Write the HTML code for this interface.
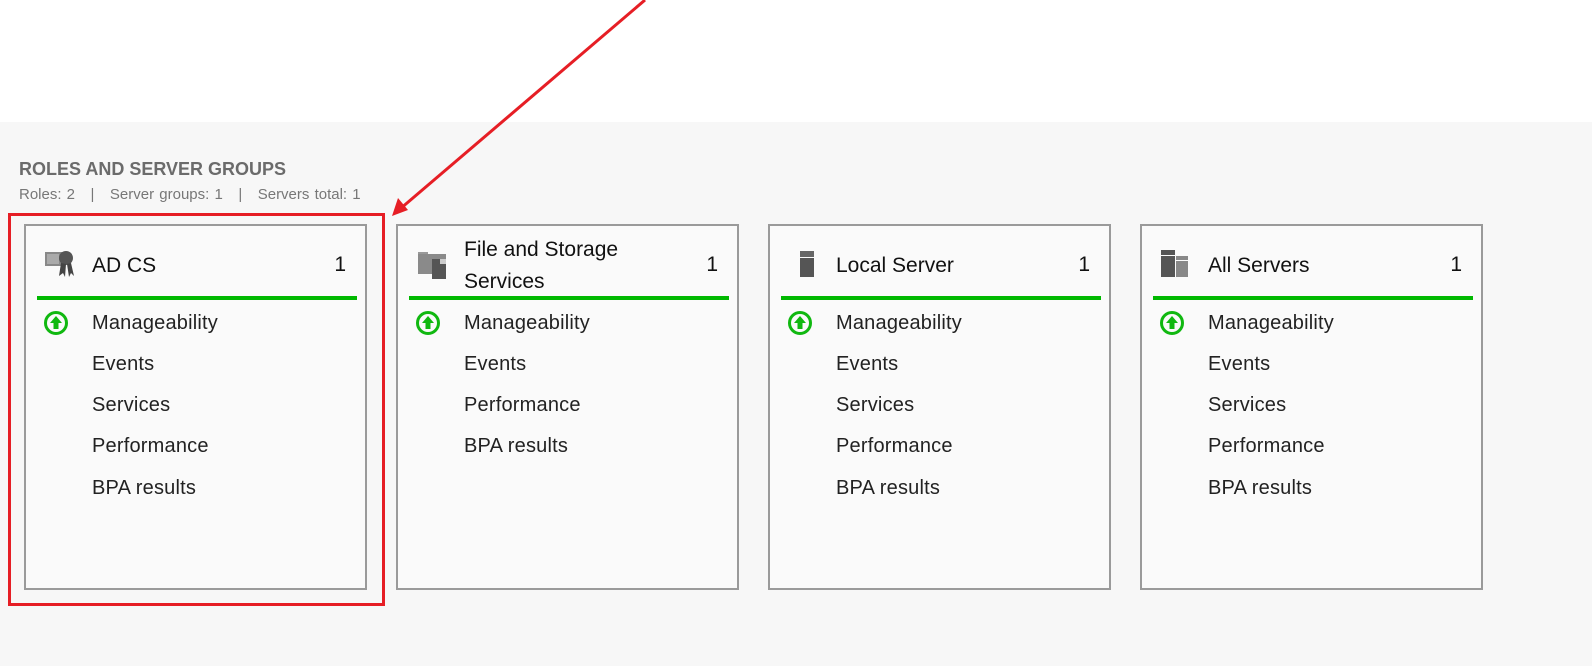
<!DOCTYPE html>
<html><head><meta charset="utf-8"><style>
body{margin:0;width:1592px;height:666px;position:relative;overflow:hidden;background:#fff;font-family:"Segoe UI","Liberation Sans",sans-serif;}
.gray{position:absolute;left:0;top:122px;width:1592px;height:544px;background:#f7f7f7;}
.h1{position:absolute;left:19px;top:159px;font-size:18px;font-weight:bold;color:#6b6b6b;}
.h2{position:absolute;left:19px;top:186px;font-size:15px;color:#777;word-spacing:1px;}
.card{position:absolute;top:224px;width:343px;height:366px;border:2px solid #9a9a9a;background:#fafafa;box-sizing:border-box;}
.title{position:absolute;left:66px;font-size:21px;color:#111;line-height:32px;}
.num{position:absolute;right:19px;top:27px;font-size:21px;color:#111;}
.line{position:absolute;left:11px;top:70px;width:320px;height:4px;background:#00b800;}
.row{position:absolute;left:66px;font-size:20px;letter-spacing:0.2px;color:#222;}
.ic{position:absolute;left:17px;top:84px;width:26px;height:26px;}
.icon{position:absolute;left:18px;top:22px;}
</style></head><body>
<div class="gray"></div>
<div class="h1">ROLES AND SERVER GROUPS</div>
<div class="h2">Roles: 2 &nbsp;&nbsp;|&nbsp;&nbsp; Server groups: 1 &nbsp;&nbsp;|&nbsp;&nbsp; Servers total: 1</div>

<div class="card" style="left:24px">
 <svg class="icon" width="32" height="32" viewBox="0 0 32 32"><rect x="1" y="4" width="18" height="14" fill="#888"/><rect x="3" y="6" width="12" height="10" fill="#aaa"/><circle cx="22" cy="10" r="7" fill="#555"/><path d="M17 15 L15 28 L19 25 L21 29 L22 16Z M23 16 L25 29 L27 25 L30 28 L27 15Z" fill="#444"/></svg>
 <div class="title" style="top:24px">AD CS</div><div class="num">1</div><div class="line"></div>
 <svg class="ic" viewBox="0 0 26 26"><circle cx="13" cy="13" r="10.5" fill="none" stroke="#10b810" stroke-width="3"/><path d="M13 6 L19 13 H15.5 V19 H10.5 V13 H7Z" fill="#10b810"/></svg>
 <div class="row" style="top:86px">Manageability</div>
 <div class="row" style="top:127px">Events</div>
 <div class="row" style="top:168px">Services</div>
 <div class="row" style="top:209px">Performance</div>
 <div class="row" style="top:251px">BPA results</div>
</div>

<div class="card" style="left:396px">
 <svg class="icon" width="32" height="32" viewBox="0 0 32 32"><rect x="2" y="4" width="10" height="3" fill="#999"/><rect x="2" y="6" width="28" height="20" fill="#8a8a8a"/><rect x="16" y="11" width="14" height="20" fill="#555"/><rect x="24" y="11" width="6" height="5" fill="#ccc"/></svg>
 <div class="title" style="top:8px">File and Storage<br>Services</div><div class="num">1</div><div class="line"></div>
 <svg class="ic" viewBox="0 0 26 26"><circle cx="13" cy="13" r="10.5" fill="none" stroke="#10b810" stroke-width="3"/><path d="M13 6 L19 13 H15.5 V19 H10.5 V13 H7Z" fill="#10b810"/></svg>
 <div class="row" style="top:86px">Manageability</div>
 <div class="row" style="top:127px">Events</div>
 <div class="row" style="top:168px">Performance</div>
 <div class="row" style="top:209px">BPA results</div>
</div>

<div class="card" style="left:768px">
 <svg class="icon" width="32" height="32" viewBox="0 0 32 32"><rect x="12" y="3" width="14" height="6" fill="#666"/><rect x="12" y="10" width="14" height="19" fill="#555"/></svg>
 <div class="title" style="top:24px">Local Server</div><div class="num">1</div><div class="line"></div>
 <svg class="ic" viewBox="0 0 26 26"><circle cx="13" cy="13" r="10.5" fill="none" stroke="#10b810" stroke-width="3"/><path d="M13 6 L19 13 H15.5 V19 H10.5 V13 H7Z" fill="#10b810"/></svg>
 <div class="row" style="top:86px">Manageability</div>
 <div class="row" style="top:127px">Events</div>
 <div class="row" style="top:168px">Services</div>
 <div class="row" style="top:209px">Performance</div>
 <div class="row" style="top:251px">BPA results</div>
</div>

<div class="card" style="left:1140px">
 <svg class="icon" width="32" height="32" viewBox="0 0 32 32"><rect x="1" y="2" width="14" height="5" fill="#555"/><rect x="1" y="8" width="14" height="21" fill="#555"/><rect x="16" y="8" width="12" height="4" fill="#888"/><rect x="16" y="13" width="12" height="16" fill="#888"/></svg>
 <div class="title" style="top:24px">All Servers</div><div class="num">1</div><div class="line"></div>
 <svg class="ic" viewBox="0 0 26 26"><circle cx="13" cy="13" r="10.5" fill="none" stroke="#10b810" stroke-width="3"/><path d="M13 6 L19 13 H15.5 V19 H10.5 V13 H7Z" fill="#10b810"/></svg>
 <div class="row" style="top:86px">Manageability</div>
 <div class="row" style="top:127px">Events</div>
 <div class="row" style="top:168px">Services</div>
 <div class="row" style="top:209px">Performance</div>
 <div class="row" style="top:251px">BPA results</div>
</div>

<div style="position:absolute;left:8px;top:213px;width:371px;height:387px;border:3px solid #e61e25;"></div>
<svg style="position:absolute;left:0;top:0" width="1592" height="666"><line x1="645" y1="0" x2="400" y2="209" stroke="#e61e25" stroke-width="3"/><path d="M392 216 L398 198 L408 210Z" fill="#e61e25"/></svg>
</body></html>
